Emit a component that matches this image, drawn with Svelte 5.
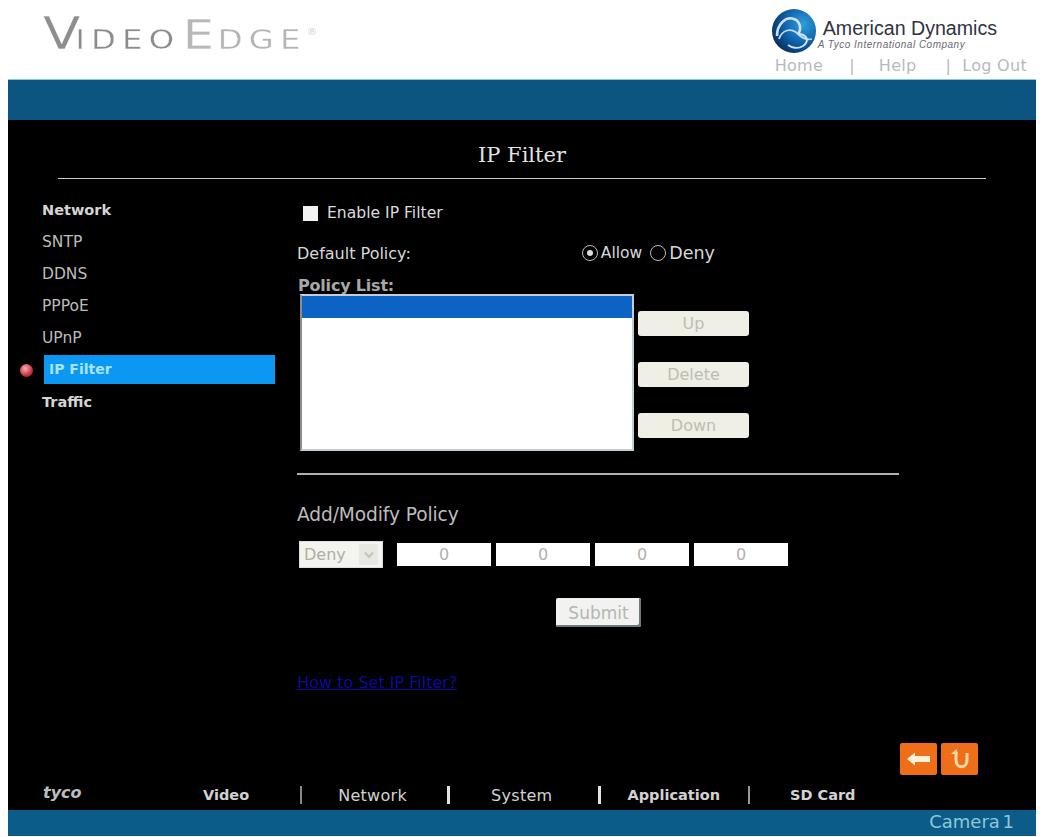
<script>
  const sections = ['Network', 'SNTP', 'DDNS', 'PPPoE', 'UPnP', 'IP Filter', 'Traffic'];
  const active = 'IP Filter';
  const tabs = ['Video', 'Network', 'System', 'Application', 'SD Card'];
  const octets = [0, 0, 0, 0];
</script>

<div class="page">
  <header class="top">
    <div class="brand">
      <span class="big v">V</span><span class="word">IDEO</span><span class="big e">E</span><span class="word light">DGE</span><sup>®</sup>
    </div>
    <div class="top-right">
      <div class="ad-logo">
        <svg width="46" height="46" viewBox="0 0 46 46">
          <defs>
            <radialGradient id="globe" cx="0.7" cy="0.35" r="0.85">
              <stop offset="0" stop-color="#2f9fdc" />
              <stop offset="0.5" stop-color="#0f62aa" />
              <stop offset="1" stop-color="#061f45" />
            </radialGradient>
          </defs>
          <circle cx="23" cy="23" r="22" fill="url(#globe)" />
          <path d="M6 28C6 16 15 8 23 11C29 13 31 21 27 26" fill="none" stroke="#cfe3f2" stroke-width="2.6" />
          <path d="M8 31C11 22 20 19 27 26C32 31 37 32 41 31" fill="none" stroke="#bcd8ee" stroke-width="1.8" />
          <path d="M27 26C36 26 39 33 32 38C27 41 21 40 17 37" fill="none" stroke="#cfe3f2" stroke-width="2" />
        </svg>
        <div class="ad-text">
          <div class="ad-name">American Dynamics</div>
          <div class="ad-sub">A Tyco International Company</div>
        </div>
      </div>
      <nav class="util">
        <span>Home</span><i>|</i><span>Help</span><i>|</i><span>Log Out</span>
      </nav>
    </div>
  </header>

  <div class="band"></div>

  <main class="main">
    <h1>IP Filter</h1>
    <hr class="title-rule" />

    <div class="body">
      <ul class="side">
        {#each sections as s}
          <li class:active={s === active}>
            <span class="marker">
              {#if s === active}<span class="ball"></span>{/if}
            </span>
            <span class="side-label" class:strong={s === 'Network' || s === 'Traffic'}>{s}</span>
          </li>
        {/each}
      </ul>

      <section class="form">
        <label class="enable"><span class="check"></span>Enable IP Filter</label>

        <div class="policy-row">
          <span>Default Policy:</span>
          <div class="radios">
            <span class="radio on"></span><span>Allow</span>
            <span class="radio"></span><span class="deny">Deny</span>
          </div>
        </div>

        <div class="list-title">Policy List:</div>
        <div class="list-row">
          <div class="listbox"><div class="selected"></div></div>
          <div class="list-btns">
            <button>Up</button>
            <button>Delete</button>
            <button>Down</button>
          </div>
        </div>

        <hr class="form-rule" />

        <h2>Add/Modify Policy</h2>
        <div class="add-row">
          <div class="select">
            <span>Deny</span>
            <span class="arrow">
              <svg width="12" height="8" viewBox="0 0 12 8"><path d="M2 1.5L6 6L10 1.5" fill="none" stroke="#c4c4bc" stroke-width="2" /></svg>
            </span>
          </div>
          <div class="octets">
            {#each octets as o}
              <div class="octet">{o}</div>
            {/each}
          </div>
        </div>

        <div class="submit-row"><button class="submit">Submit</button></div>

        <a class="help" href="#help">How to Set IP Filter?</a>
      </section>
    </div>

    <div class="actions">
      <div class="act">
        <svg width="26" height="16" viewBox="0 0 26 16"><path d="M1 8L9 1.5V5H24V11H9V14.5Z" fill="#fff0d8" /></svg>
      </div>
      <div class="act">
        <svg width="24" height="24" viewBox="0 0 24 24"><path d="M8 5V13C8 22 19 22 19 13V6" fill="none" stroke="#fbd9a4" stroke-width="3" /><path d="M3 7L8.5 2L10 7Z" fill="#fbd9a4" /></svg>
      </div>
    </div>

    <div class="tabs">
      <span class="tyco">tyco</span>
      {#each tabs as t, i}
        <span class="tab tab-{i}">{t}</span>
        {#if i < tabs.length - 1}<span class="sep sep-{i}"></span>{/if}
      {/each}
    </div>
  </main>

  <footer class="foot">Camera 1</footer>
</div>

<style>
  :global(body) {
    margin: 0;
    background: #fff;
  }

  .page {
    width: 1043px;
    height: 837px;
    box-sizing: border-box;
    padding: 0 7px 1px 8px;
    display: flex;
    flex-direction: column;
    overflow: hidden;
    font-family: "DejaVu Sans", sans-serif;
    font-size: 15px;
    color: #d6d6d6;
  }

  .top {
    height: 79px;
    display: flex;
    justify-content: space-between;
  }

  .brand {
    padding: 14px 0 0 35px;
    height: 40px;
    display: flex;
    align-items: baseline;
    font-family: "DejaVu Sans", sans-serif;
    font-size: 26px;
    line-height: 40px;
    letter-spacing: 5px;
    color: #a8a8a8;
    -webkit-text-stroke: 0.3px #fff;
    transform: scaleX(1.24);
    transform-origin: 35px 0;
  }
  .brand .big {
    font-size: 40px;
    letter-spacing: 0;
    color: #a0a0a0;
  }
  .brand .v {
    font-size: 44px;
    line-height: 40px;
    letter-spacing: -4px;
    color: #8e8e8e;
  }
  .brand .word {
    color: #8c8c8c;
  }
  .brand .e {
    margin: 0 3px 0 2px;
    color: #b8b8b8;
  }
  .brand .light {
    color: #b4b4b4;
  }
  .brand sup {
    font-size: 9px;
    line-height: 1;
    letter-spacing: 0;
    align-self: flex-start;
    margin-top: 14px;
    color: #999;
  }

  .top-right {
    display: flex;
    flex-direction: column;
    align-items: flex-end;
  }
  .ad-logo {
    display: flex;
    gap: 6px;
    padding: 8px 39px 0 0;
    height: 48px;
  }
  .ad-name {
    font-family: "Liberation Sans", sans-serif;
    font-size: 19.6px;
    line-height: 22px;
    margin-top: 9px;
    color: #2e3440;
  }
  .ad-sub {
    font-family: "Liberation Sans", sans-serif;
    font-size: 10px;
    font-style: italic;
    letter-spacing: 0.5px;
    line-height: 12px;
    margin-left: -5px;
    color: #6a6a72;
  }
  .util {
    display: flex;
    align-items: center;
    font-size: 16px;
    letter-spacing: 0.3px;
    line-height: 20px;
    margin-right: 9px;
    color: #b5bbbc;
  }
  .util i {
    font-style: normal;
    margin: 0 24px 0 26px;
  }
  .util i:last-of-type {
    margin: 0 11px 0 29px;
  }

  .band {
    height: 41px;
    flex: none;
    background: #0b5580;
    border-top: 1px solid #8fc6d0;
    box-sizing: border-box;
  }

  .main {
    height: 690px;
    flex: none;
    background: #000;
    position: relative;
  }

  h1 {
    margin: 0;
    padding-top: 21px;
    height: 37px;
    font-family: "DejaVu Serif", serif;
    font-size: 21px;
    font-weight: 400;
    line-height: 28px;
    text-align: center;
    color: #e4e4e4;
  }
  .title-rule {
    margin: 0 50px 0 50px;
    border: 0;
    height: 1px;
    background: #c8c8c8;
  }

  .body {
    display: flex;
    padding-top: 15px;
  }

  .side {
    list-style: none;
    margin: 0;
    padding: 0;
    width: 267px;
    flex: none;
  }
  .side li {
    height: 32px;
    display: flex;
    align-items: center;
  }
  .marker {
    width: 36px;
    flex: none;
    display: flex;
    justify-content: flex-end;
    padding-right: 11px;
    box-sizing: border-box;
  }
  .ball {
    width: 13px;
    height: 13px;
    border-radius: 50%;
    background: radial-gradient(circle at 40% 35%, #f4b0b8, #c8303f 60%, #7d1522);
  }
  .side-label {
    flex: 1;
    font-size: 15.5px;
    margin-left: -2px;
    color: #bcbcbc;
  }
  .side-label.strong {
    color: #d4d4d4;
    font-weight: 700;
    font-size: 14.5px;
  }
  .side li.active .side-label {
    height: 29px;
    line-height: 29px;
    margin: 0 0 2px;
    padding-left: 5px;
    background: #0a98f2;
    color: #a8e4f4;
    font-weight: 700;
    font-size: 14px;
  }

  .form {
    flex: 1;
    padding-left: 22px;
  }

  .enable {
    display: flex;
    align-items: center;
    gap: 9px;
    height: 32px;
    padding-left: 6px;
    margin-top: 3px;
    font-size: 15.6px;
    color: #dcdcdc;
  }
  .check {
    width: 15px;
    height: 15px;
    background: #f2f2f2;
  }

  .policy-row {
    display: flex;
    align-items: center;
    height: 32px;
    margin-top: 8px;
    font-size: 16px;
    color: #d8d8d8;
  }
  .radios {
    display: flex;
    align-items: center;
    gap: 3px;
    margin-left: 171px;
    font-size: 15.5px;
  }
  .radio {
    width: 14px;
    height: 14px;
    border: 1px solid #bbb;
    border-radius: 50%;
    position: relative;
  }
  .radios .radio:nth-of-type(3) {
    margin-left: 5px;
  }
  .deny {
    font-size: 17.5px;
  }
  .radio.on::after {
    content: "";
    position: absolute;
    inset: 4px;
    border-radius: 50%;
    background: #ddd;
  }

  .list-title {
    height: 17px;
    line-height: 17px;
    margin-top: 8px;
    padding-left: 1px;
    font-size: 16px;
    font-weight: 700;
    letter-spacing: -0.2px;
    color: #a8a8a8;
  }

  .list-row {
    display: flex;
    gap: 4px;
    padding-left: 3px;
  }
  .listbox {
    width: 334px;
    height: 157px;
    box-sizing: border-box;
    background: #fff;
    border: 2px solid #c4ccd4;
    border-left-color: #8c8c8c;
  }
  .selected {
    height: 22px;
    background: #0c63c3;
  }
  .list-btns {
    display: flex;
    flex-direction: column;
    gap: 26px;
    padding-top: 17px;
  }
  button {
    font: inherit;
    font-size: 16px;
    color: #bcbeb2;
    background: #efefe6;
    border: 0;
    border-radius: 3px;
    padding: 0;
    width: 111px;
    height: 25px;
  }

  .form-rule {
    width: 602px;
    margin: 22px 0 0;
    border: 0;
    height: 2px;
    background: #b0b0b0;
  }

  h2 {
    margin: 0;
    padding-top: 28px;
    height: 38px;
    line-height: 24px;
    font-size: 18.6px;
    font-weight: 400;
    letter-spacing: -0.1px;
    color: #bcbcbc;
  }

  .add-row {
    display: flex;
    align-items: center;
    height: 27px;
    padding-left: 2px;
  }
  .select {
    width: 84px;
    height: 27px;
    box-sizing: border-box;
    background: #f4f4ee;
    border: 1px solid #ddd;
    display: flex;
    align-items: center;
    justify-content: space-between;
    padding: 0 4px 0 4px;
    font-size: 16px;
    color: #aeaea4;
  }
  .arrow {
    width: 19px;
    height: 21px;
    background: #e8e8e2;
    display: flex;
    align-items: center;
    justify-content: center;
  }
  .octets {
    display: flex;
    gap: 5px;
    margin-left: 14px;
  }
  .octet {
    width: 94px;
    height: 23px;
    background: #fff;
    text-align: center;
    line-height: 23px;
    font-size: 16px;
    color: #b0b0b0;
  }

  .submit-row {
    padding: 30px 0 0 259px;
  }
  .submit {
    width: 85px;
    height: 29px;
    font-size: 17px;
    background: #f2f3f0;
    color: #b4b6b4;
    box-shadow: inset -2px -2px 0 #6f7880;
    border-radius: 2px;
  }

  .help {
    display: block;
    margin-top: 46px;
    font-size: 16px;
    line-height: 20px;
    color: #0a0aa8;
    text-decoration: underline;
    filter: blur(0.6px);
  }

  .actions {
    position: absolute;
    left: 892px;
    top: 623px;
    display: flex;
    gap: 4px;
  }
  .act {
    width: 37px;
    height: 32px;
    border-radius: 2px;
    background: #ee6e1a;
    display: flex;
    align-items: center;
    justify-content: center;
  }

  .tabs {
    position: absolute;
    left: 0;
    right: 0;
    bottom: 0;
    height: 30px;
    display: flex;
    align-items: center;
    font-size: 16px;
    letter-spacing: 0.3px;
    color: #d2d2d2;
  }
  .tyco {
    margin-left: 35px;
    width: 160px;
    margin-top: -6px;
    font-size: 16px;
    font-weight: 700;
    font-style: italic;
    letter-spacing: 0;
    color: #bdbdbd;
  }
  .sep {
    width: 2px;
    height: 18px;
    background: #c8c8c8;
  }
  .sep-0 { margin: 0 36px 0 51px; background: #888; }
  .sep-1 { margin: 0 41px 0 40px; width: 3px; background: #e2e2e2; }
  .sep-2 { margin: 0 27px 0 45px; width: 3px; background: #e2e2e2; }
  .sep-3 { margin: 0 40px 0 28px; background: #999; }
  .tab-0, .tab-3, .tab-4 { font-weight: 700; font-size: 14.5px; letter-spacing: 0; }

  .foot {
    height: 26px;
    flex: none;
    background: #0b5c88;
    text-align: right;
    padding-right: 22px;
    font-size: 18px;
    word-spacing: -3px;
    line-height: 24px;
    color: #8fc6da;
  }
</style>
